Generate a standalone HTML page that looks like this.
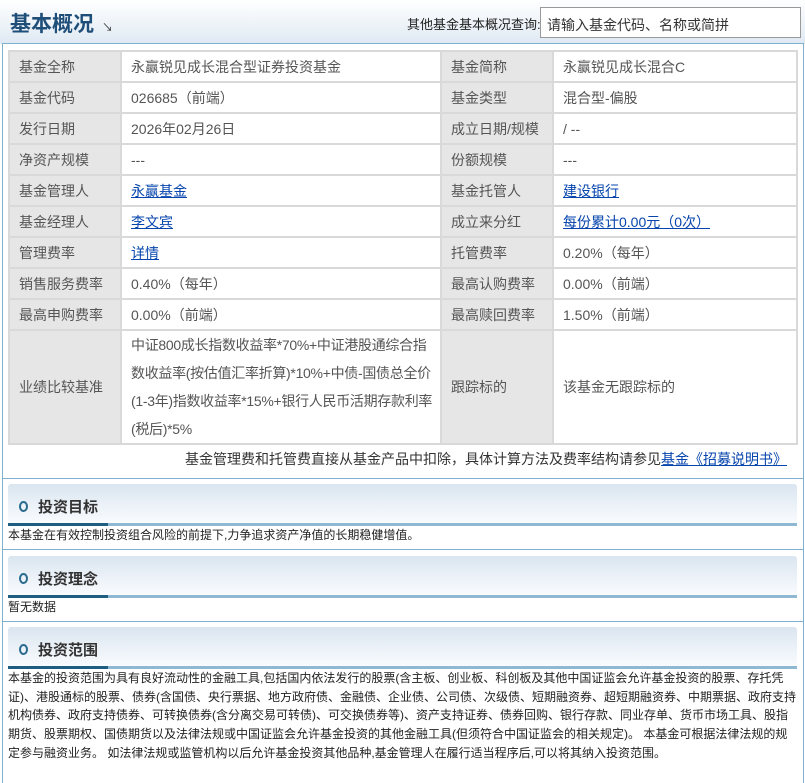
<!DOCTYPE html>
<html><head><meta charset="utf-8"><style>
*{margin:0;padding:0;box-sizing:border-box}
body{width:805px;height:771px;overflow:hidden;background:#fff;font-family:"Liberation Sans","Noto Sans CJK SC",sans-serif;position:relative}
.top{position:absolute;left:0;top:0;width:805px;height:44px;background:linear-gradient(#fff,#dfe9f3)}
.title{position:absolute;left:10px;top:8px;font-size:21px;font-weight:bold;color:#1f4e79}
.title span{font-size:11px;color:#333;font-weight:normal;margin-left:8px}
.q{position:absolute;left:407px;top:14px;font-size:13px;color:#222}
.inp{position:absolute;left:540px;top:7px;width:261px;height:31px;border:1px solid #999;background:#fff;font-size:14px;color:#333;padding:7px 6px}
.box{position:absolute;left:2px;top:43px;width:802px;height:740px;border:1px solid #7fb0d0;border-bottom:none}
table{position:absolute;left:8px;top:50px;width:790px;border-collapse:collapse;font-size:14px;color:#555;table-layout:fixed}
td{border:2px solid #d9d9d9;height:31px;padding:0 9px;vertical-align:middle}
td.l{background:#e6e6e6}
a{color:#0645ad;text-decoration:underline}
.bench{line-height:28px;height:112px;padding:0 2px 0 9px;letter-spacing:-0.3px}
.note{position:absolute;right:18px;top:449px;font-size:14px;color:#333}
.hr{position:absolute;left:2px;width:802px;border-top:1px solid #7fb0d0}
.sh{position:absolute;left:8px;width:789px;height:40px;background:linear-gradient(#dae5f0,#fafcfe);border-radius:3px 3px 0 0}
.sh b{position:absolute;left:30px;top:12px;font-size:15px;color:#333}
.sh i{position:absolute;left:11px;top:17px;width:9px;height:11px;border:2px solid #2b6a8f;border-radius:50%}
.ul{position:absolute;left:8px;width:789px;height:3px;background:#8fb8d2}
.ul::before{content:"";position:absolute;left:0;top:0;width:100px;height:3px;background:#1e5e80}
.t{position:absolute;left:8px;width:790px;font-size:12px;color:#222;line-height:18.7px}
</style></head><body>
<div class="top"></div>
<div class="title">基本概况<span>↘</span></div>
<div class="q">其他基金基本概况查询:</div>
<div class="inp">请输入基金代码、名称或简拼</div>
<div class="box"></div>
<table>
<colgroup><col style="width:112px"><col style="width:320px"><col style="width:112px"><col></colgroup>
<tr><td class="l">基金全称</td><td>永赢锐见成长混合型证券投资基金</td><td class="l">基金简称</td><td>永赢锐见成长混合C</td></tr>
<tr><td class="l">基金代码</td><td>026685（前端）</td><td class="l">基金类型</td><td>混合型-偏股</td></tr>
<tr><td class="l">发行日期</td><td>2026年02月26日</td><td class="l">成立日期/规模</td><td>/ --</td></tr>
<tr><td class="l">净资产规模</td><td>---</td><td class="l">份额规模</td><td>---</td></tr>
<tr><td class="l">基金管理人</td><td><a>永赢基金</a></td><td class="l">基金托管人</td><td><a>建设银行</a></td></tr>
<tr><td class="l">基金经理人</td><td><a>李文宾</a></td><td class="l">成立来分红</td><td><a>每份累计0.00元（0次）</a></td></tr>
<tr><td class="l">管理费率</td><td><a>详情</a></td><td class="l">托管费率</td><td>0.20%（每年）</td></tr>
<tr><td class="l">销售服务费率</td><td>0.40%（每年）</td><td class="l">最高认购费率</td><td>0.00%（前端）</td></tr>
<tr><td class="l">最高申购费率</td><td>0.00%（前端）</td><td class="l">最高赎回费率</td><td>1.50%（前端）</td></tr>
<tr><td class="l">业绩比较基准</td><td class="bench">中证800成长指数收益率*70%+中证港股通综合指数收益率(按估值汇率折算)*10%+中债-国债总全价(1-3年)指数收益率*15%+银行人民币活期存款利率(税后)*5%</td><td class="l">跟踪标的</td><td>该基金无跟踪标的</td></tr>
</table>
<div class="note">基金管理费和托管费直接从基金产品中扣除，具体计算方法及费率结构请参见<a>基金《招募说明书》</a></div>
<div class="hr" style="top:478px"></div>
<div class="sh" style="top:484px"><i></i><b>投资目标</b></div>
<div class="ul" style="top:523px"></div>
<div class="t" style="top:526px">本基金在有效控制投资组合风险的前提下,力争追求资产净值的长期稳健增值。</div>
<div class="hr" style="top:549px"></div>
<div class="sh" style="top:556px"><i></i><b>投资理念</b></div>
<div class="ul" style="top:595px"></div>
<div class="t" style="top:598px">暂无数据</div>
<div class="hr" style="top:621px"></div>
<div class="sh" style="top:627px"><i></i><b>投资范围</b></div>
<div class="ul" style="top:666px"></div>
<div class="t" style="top:669px">本基金的投资范围为具有良好流动性的金融工具,包括国内依法发行的股票(含主板、创业板、科创板及其他中国证监会允许基金投资的股票、存托凭证)、港股通标的股票、债券(含国债、央行票据、地方政府债、金融债、企业债、公司债、次级债、短期融资券、超短期融资券、中期票据、政府支持机构债券、政府支持债券、可转换债券(含分离交易可转债)、可交换债券等)、资产支持证券、债券回购、银行存款、同业存单、货币市场工具、股指期货、股票期权、国债期货以及法律法规或中国证监会允许基金投资的其他金融工具(但须符合中国证监会的相关规定)。 本基金可根据法律法规的规定参与融资业务。 如法律法规或监管机构以后允许基金投资其他品种,基金管理人在履行适当程序后,可以将其纳入投资范围。</div>
</body></html>
